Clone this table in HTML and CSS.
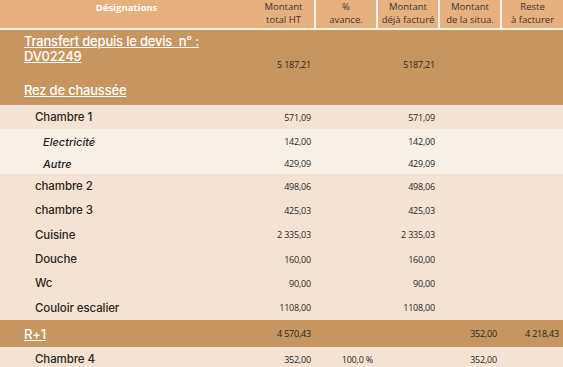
FILE: index.html
```html
<!DOCTYPE html>
<html lang="fr">
<head>
<meta charset="utf-8">
<title>Situation</title>
<link rel="stylesheet" href="styles.css">
</head>
<body>
<table class="grid">
  <colgroup>
    <col class="c-des"><col class="c-num"><col class="c-num"><col class="c-num"><col class="c-num"><col class="c-num">
  </colgroup>
  <thead>
    <tr class="head">
      <th class="h-des">Désignations</th>
      <th>Montant<br>total HT</th>
      <th class="sep">%<br>avance.</th>
      <th class="sep">Montant<br>déjà facturé</th>
      <th class="sep">Montant<br>de la situa.</th>
      <th class="sep">Reste<br>à facturer</th>
    </tr>
  </thead>
  <tbody>
    <tr class="group first">
      <td class="g-label">
        <div class="g-title"><span class="u">Transfert depuis le devis&nbsp; n° :</span><br><span class="u">DV02249</span></div>
        <div class="g-sub"><span class="u">Rez de chaussée</span></div>
      </td>
      <td class="num">5 187,21</td>
      <td class="num"></td>
      <td class="num">5187,21</td>
      <td class="num"></td>
      <td class="num"></td>
    </tr>
    <tr class="item">
      <td class="lbl">Chambre 1</td>
      <td class="num">571,09</td><td class="num"></td><td class="num">571,09</td><td class="num"></td><td class="num"></td>
    </tr>
    <tr class="sub s1">
      <td class="lbl">Electricité</td>
      <td class="num">142,00</td><td class="num"></td><td class="num">142,00</td><td class="num"></td><td class="num"></td>
    </tr>
    <tr class="sub s2">
      <td class="lbl">Autre</td>
      <td class="num">429,09</td><td class="num"></td><td class="num">429,09</td><td class="num"></td><td class="num"></td>
    </tr>
    <tr class="item">
      <td class="lbl">chambre 2</td>
      <td class="num">498,06</td><td class="num"></td><td class="num">498,06</td><td class="num"></td><td class="num"></td>
    </tr>
    <tr class="item">
      <td class="lbl">chambre 3</td>
      <td class="num">425,03</td><td class="num"></td><td class="num">425,03</td><td class="num"></td><td class="num"></td>
    </tr>
    <tr class="item tall">
      <td class="lbl">Cuisine</td>
      <td class="num">2 335,03</td><td class="num"></td><td class="num">2 335,03</td><td class="num"></td><td class="num"></td>
    </tr>
    <tr class="item">
      <td class="lbl">Douche</td>
      <td class="num">160,00</td><td class="num"></td><td class="num">160,00</td><td class="num"></td><td class="num"></td>
    </tr>
    <tr class="item">
      <td class="lbl">Wc</td>
      <td class="num">90,00</td><td class="num"></td><td class="num">90,00</td><td class="num"></td><td class="num"></td>
    </tr>
    <tr class="item tall">
      <td class="lbl">Couloir escalier</td>
      <td class="num">1108,00</td><td class="num"></td><td class="num">1108,00</td><td class="num"></td><td class="num"></td>
    </tr>
    <tr class="group level">
      <td class="g-label"><span class="u">R+1</span></td>
      <td class="num">4 570,43</td><td class="num"></td><td class="num"></td><td class="num">352,00</td><td class="num">4 218,43</td>
    </tr>
    <tr class="item">
      <td class="lbl">Chambre 4</td>
      <td class="num">352,00</td><td class="num">100,0 %</td><td class="num"></td><td class="num">352,00</td><td class="num"></td>
    </tr>
  </tbody>
</table>
</body>
</html>
```

FILE: styles.css
```css
html, body {
  margin: 0;
  padding: 0;
  background: #f3e3d4;
  font-family: "Open Sans", "Liberation Sans", sans-serif;
  color: #2a2a2a;
}

.grid {
  width: 563px;
  table-layout: fixed;
  border-collapse: collapse;
  border-spacing: 0;
}

.c-des { width: 253px; }
.c-num { width: 62px; }

.head th {
  background: #e7b07f;
  height: 28px;
  padding: 0;
  font-size: 9.5px;
  line-height: 13px;
  font-weight: 400;
  color: #3a3630;
  text-align: center;
  vertical-align: top;
  border-bottom: 2px solid #fbf3ea;
}

.head th.sep {
  border-left: 2px solid #fbf3ea;
}

.head th.h-des {
  color: #ffffff;
  font-weight: 700;
  line-height: 15px;
}

td {
  padding: 0;
}

.num {
  text-align: right;
  padding-right: 4px;
  font-size: 9px;
  letter-spacing: -0.2px;
  color: #262626;
}

.group {
  background: #c7955f;
}

.g-label {
  color: #ffffff;
  font-family: Inter, "Open Sans", sans-serif;
  font-size: 13px;
  font-weight: 500;
  letter-spacing: -0.2px;
  padding-left: 24px;
}

.u {
  text-decoration: underline;
  text-underline-offset: 1px;
}

.first td {
  vertical-align: top;
}

.first .g-label {
  padding-top: 4px;
  padding-bottom: 7px;
  line-height: 15px;
}

.first .num {
  padding-top: 28px;
}

.g-sub {
  margin-top: 19px;
}

.level td {
  height: 27px;
  vertical-align: middle;
}

.item {
  background: #f3e3d4;
}

.item td {
  height: 24px;
  vertical-align: middle;
}

.item.tall td {
  height: 25px;
}

.item .lbl {
  padding-left: 35px;
  font-family: Inter, "Open Sans", sans-serif;
  font-size: 11.5px;
  font-weight: 500;
  letter-spacing: -0.1px;
  color: #2a2622;
}

.sub {
  background: #f8efe6;
}

.sub td {
  vertical-align: middle;
}

.sub.s1 td {
  height: 23px;
  padding-top: 1px;
}

.sub.s2 td {
  height: 21px;
}

.sub .lbl {
  padding-left: 43px;
  font-family: Inter, "Open Sans", sans-serif;
  font-size: 11px;
  font-style: italic;
  font-weight: 500;
  color: #24201c;
}
```
